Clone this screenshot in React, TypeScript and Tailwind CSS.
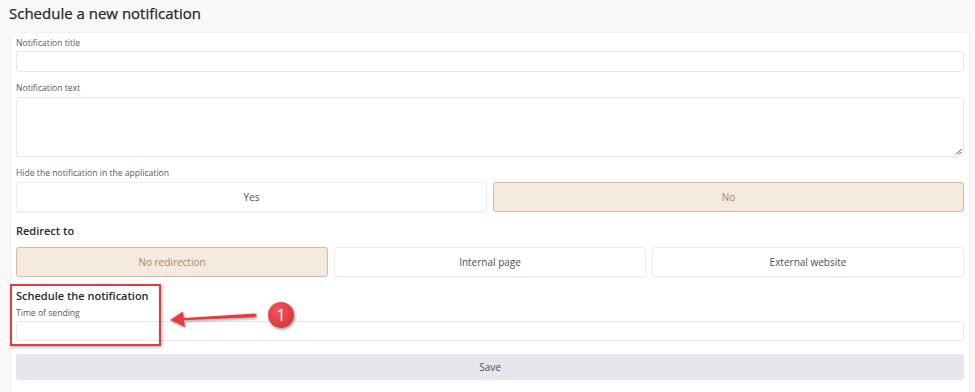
import React from 'react';

const FONT = { fontFamily: '"Open Sans", "Noto Sans", Arial, sans-serif' };

function Label({ children, className = '' }: { children: React.ReactNode; className?: string }) {
  return <div className={`h-[12px] text-[8.6px] leading-[12px] text-[#555b63] ${className}`}>{children}</div>;
}

function Choice({ label, active }: { label: string; active?: boolean }) {
  return (
    <button
      className={`h-[30px] rounded-[3px] border text-[10px] ${
        active
          ? 'bg-[#f5eadf] border-[#dcb893] text-[#b0875c]'
          : 'bg-white border-[#ececef] text-[#4b5058] shadow-[0_1px_1px_rgba(0,0,0,0.04)]'
      }`}
    >
      {label}
    </button>
  );
}

export default function App() {
  return (
    <div className="relative w-[975px] h-[392px] overflow-hidden bg-[#f8f8f8]" style={FONT}>
      {/* page title */}
      <h1 className="h-[32px] pl-[9px] pt-[2px] text-[15px] leading-[22px] text-[#1f2630] [-webkit-text-stroke:0.25px_#1f2630]">
        Schedule a new notification
      </h1>

      {/* form card */}
      <div className="ml-[10px] w-[960px] h-[400px] bg-white border border-[#eef0f3] rounded-[3px] px-[5px] pt-[4px]">
        <Label>Notification title</Label>
        <div className="mt-[2px] h-[21px] rounded-[3px] border border-[#e6e8ec]" />

        <Label className="mt-[10px]">Notification text</Label>
        <div className="relative mt-[3px] h-[60px] rounded-[3px] border border-[#e6e8ec]">
          <svg className="absolute right-[1px] bottom-[1px]" width="7" height="7" viewBox="0 0 7 7">
            <path d="M6.5 1 L1 6.5 M6.5 4 L4 6.5" stroke="#555" strokeWidth="1" />
          </svg>
        </div>

        <Label className="mt-[10px]">Hide the notification in the application</Label>
        <div className="mt-[3px] grid grid-cols-2 gap-[6px]">
          <Choice label="Yes" />
          <Choice label="No" active />
        </div>

        <div className="mt-[11px] h-[16px] text-[11px] leading-[16px] font-semibold text-[#262c35]">Redirect to</div>
        <div className="mt-[8px] grid grid-cols-3 gap-[6px]">
          <Choice label="No redirection" active />
          <Choice label="Internal page" />
          <Choice label="External website" />
        </div>

        <div className="mt-[11px] h-[16px] text-[11px] leading-[16px] font-semibold text-[#262c35]">
          Schedule the notification
        </div>
        <Label className="mt-[3px]">Time of sending</Label>
        <div className="mt-[2px] h-[20px] rounded-[3px] border border-[#e6e8ec]" />

        <button className="mt-[13px] w-full h-[26px] rounded-[3px] bg-[#e5e6ee] text-[10px] text-[#4b5058]">Save</button>
      </div>

      {/* annotation: red frame */}
      <div className="absolute left-[10px] top-[284px] w-[151px] h-[62px] border-2 border-[#e53a3f] shadow-[1px_1px_3px_rgba(0,0,0,0.35)]" />

      {/* annotation: arrow */}
      <svg className="absolute left-[166px] top-[305px]" width="96" height="26" viewBox="0 0 96 26">
        <defs>
          <filter id="sh" x="-20%" y="-40%" width="140%" height="180%">
            <feDropShadow dx="1" dy="1.5" stdDeviation="1.2" floodColor="#000" floodOpacity="0.35" />
          </filter>
        </defs>
        <g filter="url(#sh)">
          <path d="M89 8.6 L91 10 L89 12.2 L18 15.2 L19 22 L4 15 L17 6.5 L17.8 13 Z" fill="#e53a3f" />
        </g>
      </svg>

      {/* annotation: step badge */}
      <div className="absolute left-[268px] top-[302px] w-[26px] h-[26px] rounded-full bg-[radial-gradient(circle_at_40%_35%,#f0575b,#d42a30)] shadow-[1px_1.5px_3px_rgba(0,0,0,0.4)] flex items-center justify-center text-white text-[16px] leading-none">
        1
      </div>
    </div>
  );
}
